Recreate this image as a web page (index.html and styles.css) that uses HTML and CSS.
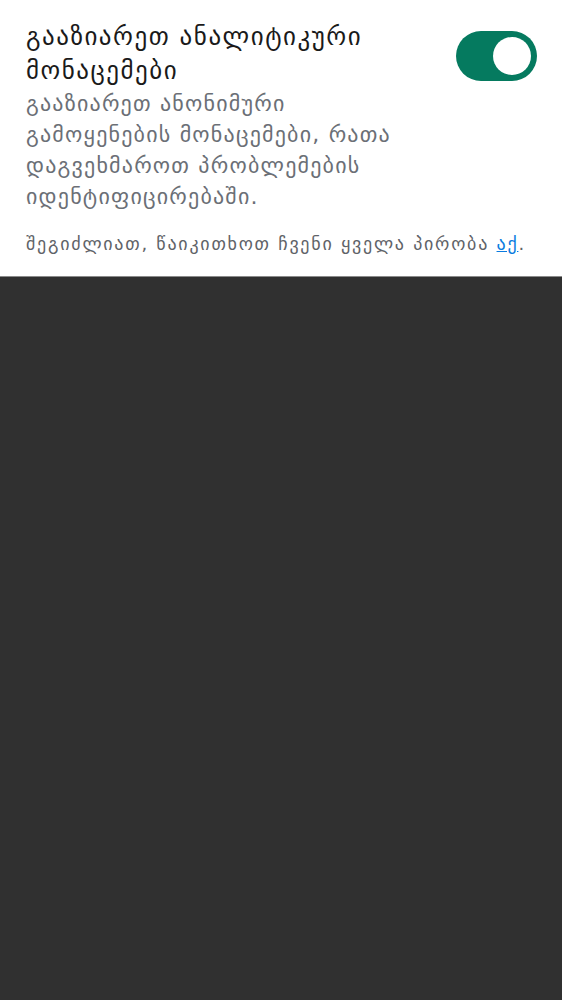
FILE: index.html
```html
<!DOCTYPE html>
<html>
<head>
<meta charset="utf-8">
<link rel="stylesheet" href="styles.css">
</head>
<body>
<div class="panel">
  <div class="row">
    <div class="texts">
      <div class="title">გააზიარეთ ანალიტიკური მონაცემები</div>
      <div class="desc">გააზიარეთ ანონიმური გამოყენების მონაცემები, რათა დაგვეხმაროთ პრობლემების იდენტიფიცირებაში.</div>
    </div>
    <div class="toggle"><div class="knob"></div></div>
  </div>
  <div class="note">შეგიძლიათ, წაიკითხოთ ჩვენი ყველა პირობა <a class="link" href="#">აქ</a>.</div>
</div>
</body>
</html>
```
FILE: styles.css
```css
html, body {
  margin: 0;
  padding: 0;
  background: #303030;
  font-family: "DejaVu Sans", "Noto Sans", sans-serif;
}
.panel {
  background: #ffffff;
  padding: 20px 25px 20px 26px;
  border-bottom: 1px solid #8a8a8a;
}
.row {
  display: flex;
  justify-content: space-between;
  align-items: flex-start;
}
.texts {
  flex: 1;
  max-width: 400px;
  margin-right: 20px;
}
.title {
  font-size: 25px;
  line-height: 34px;
  letter-spacing: 1.5px;
  color: #1a1a1a;
}
.desc {
  font-size: 22px;
  line-height: 31px;
  letter-spacing: 1.2px;
  color: #6b6f76;
}
.toggle {
  flex: none;
  width: 81px;
  height: 50px;
  border-radius: 25px;
  background: #057a5f;
  margin-top: 11px;
  display: flex;
  align-items: center;
  justify-content: flex-end;
  padding-right: 6px;
  box-sizing: border-box;
}
.knob {
  width: 38px;
  height: 38px;
  border-radius: 50%;
  background: #ffffff;
}
.note {
  margin-top: 20px;
  font-size: 18px;
  line-height: 24px;
  letter-spacing: 1.75px;
  color: #5f6368;
}
.link {
  color: #0a7be0;
  text-decoration: underline;
}
```
